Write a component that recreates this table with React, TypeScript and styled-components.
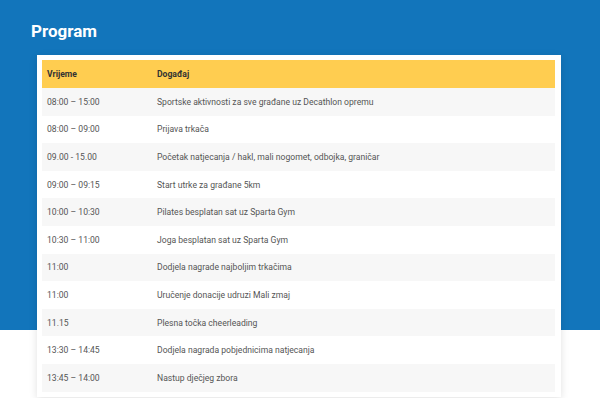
import React from 'react';
import styled, { createGlobalStyle } from 'styled-components';

const schedule = [
  { time: '08:00 – 15:00', event: 'Sportske aktivnosti za sve građane uz Decathlon opremu' },
  { time: '08:00 – 09:00', event: 'Prijava trkača' },
  { time: '09.00 - 15.00', event: 'Početak natjecanja / hakl, mali nogomet, odbojka, graničar' },
  { time: '09:00 – 09:15', event: 'Start utrke za građane 5km' },
  { time: '10:00 – 10:30', event: 'Pilates besplatan sat uz Sparta Gym' },
  { time: '10:30 – 11:00', event: 'Joga besplatan sat uz Sparta Gym' },
  { time: '11:00', event: 'Dodjela nagrade najboljim trkačima' },
  { time: '11:00', event: 'Uručenje donacije udruzi Mali zmaj' },
  { time: '11.15', event: 'Plesna točka cheerleading' },
  { time: '13:30 – 14:45', event: 'Dodjela nagrada pobjednicima natjecanja' },
  { time: '13:45 – 14:00', event: 'Nastup dječjeg zbora' },
];

const GlobalStyle = createGlobalStyle`
  html, body {
    margin: 0;
    padding: 0;
    overflow: hidden;
  }
  body {
    font-family: Roboto, 'Liberation Sans', sans-serif;
  }
`;

const Page = () => {
  return (
    <Wrapper>
      <GlobalStyle />
      <Title>Program</Title>
      <Card>
        <Table>
          <thead>
            <tr>
              <HeadCell style={{ width: '110px' }}>Vrijeme</HeadCell>
              <HeadCell>Događaj</HeadCell>
            </tr>
          </thead>
          <tbody>
            {schedule.map((item, i) => (
              <Row key={i} $striped={i % 2 === 0}>
                <Cell>{item.time}</Cell>
                <Cell>{item.event}</Cell>
              </Row>
            ))}
          </tbody>
        </Table>
      </Card>
    </Wrapper>
  );
};

const Wrapper = styled.div`
  height: 398px;
  overflow: hidden;
  padding: 22px 0 0 37px;
  box-sizing: border-box;
  background: linear-gradient(to bottom, #1275bb 0, #1275bb 330px, #ffffff 330px);
`;

const Title = styled.h1`
  margin: 0 0 14px -6px;
  font-size: 17px;
  line-height: 19px;
  font-weight: 700;
  color: #ffffff;
`;

const Card = styled.div`
  width: 524px;
  box-sizing: border-box;
  padding: 5px 6px 5px 5px;
  background: #ffffff;
  box-shadow: 0 2px 8px rgba(0, 0, 0, 0.12);
`;

const Table = styled.table`
  width: 100%;
  border-collapse: collapse;
  font-size: 8.6px;
  text-align: left;
`;

const HeadCell = styled.th`
  height: 28px;
  padding: 0 5px;
  box-sizing: border-box;
  background: #ffcd50;
  color: #333333;
  font-weight: 700;
`;

const Row = styled.tr<{ $striped: boolean }>`
  background: ${(p) => (p.$striped ? '#f7f7f7' : '#ffffff')};
`;

const Cell = styled.td`
  height: 27.6px;
  padding: 0 5px;
  box-sizing: border-box;
  color: #555555;
  vertical-align: middle;
`;

export default Page;
